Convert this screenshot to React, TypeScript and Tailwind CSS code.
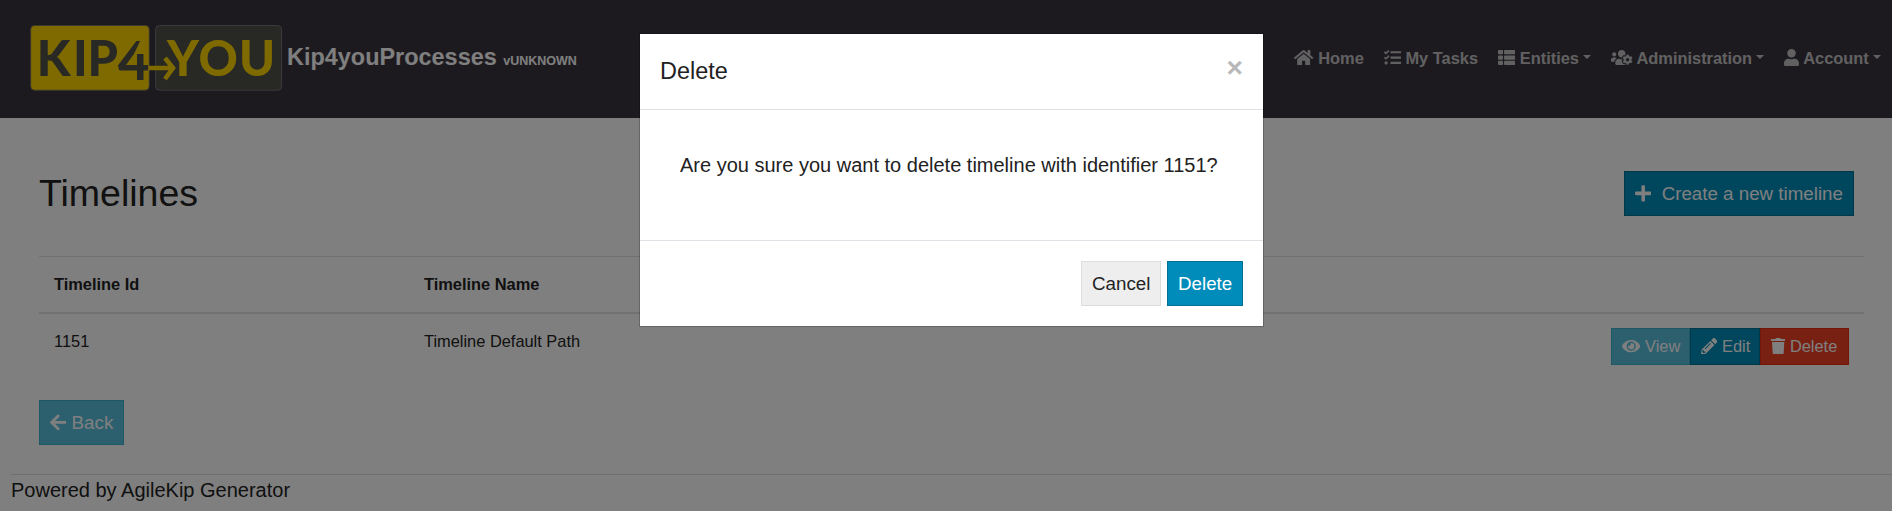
import React from "react";
import {
  FaArrowLeft,
  FaEye,
  FaHome,
  FaPencilAlt,
  FaPlus,
  FaTasks,
  FaThList,
  FaTrash,
  FaUser,
  FaUsersCog,
} from "react-icons/fa";
import type { IconType } from "react-icons";

function Icon({ as: As, ratio = "w-[1em]" }: { as: IconType; ratio?: string }) {
  return <As className={`inline-block h-[1em] align-[-0.125em] ${ratio}`} />;
}

function Logo() {
  return (
    <svg width="254" height="67" viewBox="29 24 254 67" className="block shrink-0">
      <rect x="30.7" y="25.5" width="118.5" height="64.7" rx="4" fill="#ffd400" stroke="#70706a" strokeWidth="0.8" />
      <rect x="155.6" y="25.5" width="126" height="64.7" rx="4" fill="#505148" stroke="#747478" strokeWidth="1" />
      <g fontFamily="Lato, 'Liberation Sans', sans-serif" fontWeight="900" fontSize="48.5">
        <g fill="#505148">
          <text x="36.8" y="75.5">K</text>
          <text x="73" y="75.5">I</text>
          <text x="87.5" y="75.5">P</text>
          <text x="118" y="79.7" fontSize="54">4</text>
        </g>
        <path d="M141 39H148V54H134Z" fill="#ffd400" />
        <g fill="#ffd400">
          <text x="167" y="75.5">Y</text>
          <text x="198.4" y="75.5">O</text>
          <text x="239" y="75.5">U</text>
        </g>
      </g>
      <path d="M149 68H173M165 58L173 68L165 79" fill="none" stroke="#ffd400" strokeWidth="4.6" />
    </svg>
  );
}

function NavItem({ icon: As, ratio = "w-[1.045em]", label, caret }: { icon: IconType; ratio?: string; label: string; caret?: boolean }) {
  return (
    <a className="whitespace-nowrap">
      <As className={`inline-block h-[1.045em] align-[-0.14em] ${ratio}`} /> {label}
      {caret && (
        <span className="ml-[0.255em] inline-block border-x-4 border-t-4 border-x-transparent border-t-current align-[0.3em]" />
      )}
    </a>
  );
}

function Header() {
  return (
    <header className="flex h-[118px] items-start justify-between bg-[#39353d] pr-[11px] font-bold">
      <div className="flex pl-[29px] pt-6">
        <Logo />
        <div className="ml-1 mt-4 whitespace-nowrap text-[23.44px] leading-[35px] text-white">
          Kip4youProcesses <span className="text-[12.5px]">vUNKNOWN</span>
        </div>
      </div>
      <nav className="mt-[46px] flex gap-5 text-[16.4px] leading-[24.6px] text-[#c4c3c5]">
        <NavItem icon={FaHome} ratio="w-[1.175em]" label="Home" />
        <NavItem icon={FaTasks} label="My Tasks" />
        <NavItem icon={FaThList} label="Entities" caret />
        <NavItem icon={FaUsersCog} ratio="w-[1.305em]" label="Administration" caret />
        <NavItem icon={FaUser} ratio="w-[0.915em]" label="Account" caret />
      </nav>
    </header>
  );
}

const button = "h-[45px] border px-[10px] text-[18.75px] leading-[43px] whitespace-nowrap";
const smallButton = "h-[37px] border px-[10px] text-[16.4px] leading-[35px] whitespace-nowrap text-left";

function Timelines() {
  return (
    <main className="h-[356px] pl-[39px] pr-7 pt-[53px]">
      <div className="flex h-[85px] items-start justify-between">
        <h2 className="text-[37.5px] leading-[45px] text-[#222]">Timelines</h2>
        <button className={`${button} mr-[10px] w-[230px] border-[#007095] bg-[#008cba] text-left text-white`}>
          <Icon as={FaPlus} ratio="w-[0.875em]" /> <span className="ml-[5px]">Create a new timeline</span>
        </button>
      </div>
      <div className="text-[16.4px] leading-[24.6px] text-[#222]">
        <div className="flex h-[58px] border-b-2 border-t border-b-[#dee2e6] border-t-[#dee2e6] pl-[15px] pt-[15px] font-bold">
          <div className="w-[370px]">Timeline Id</div>
          <div>Timeline Name</div>
        </div>
        <div className="flex h-[86px] pl-[15px] pr-[15px] pt-[14px]">
          <div className="w-[370px] pt-px">1151</div>
          <div className="grow pt-px">Timeline Default Path</div>
          <div className="flex text-white">
            <button className={`${smallButton} w-[79px] border-[#3db0cb] bg-[#5bc0de]`}>
              <Icon as={FaEye} ratio="w-[1.125em]" /> View
            </button>
            <button className={`${smallButton} w-[70px] border-[#007095] bg-[#008cba]`}>
              <Icon as={FaPencilAlt} /> Edit
            </button>
            <button className={`${smallButton} w-[89px] border-[#ea2f10] bg-[#f04124]`}>
              <Icon as={FaTrash} ratio="w-[0.875em]" /> Delete
            </button>
          </div>
        </div>
      </div>
      <button className={`${button} w-[85px] border-[#3db0cb] bg-[#5bc0de] text-left text-white`}>
        <Icon as={FaArrowLeft} ratio="w-[0.875em]" /> Back
      </button>
    </main>
  );
}

function DeleteDialog() {
  return (
    <div className="absolute inset-0 bg-black/50 pl-[639px] pt-[33px]">
      <section
        role="dialog"
        className="flex h-[294px] w-[625px] flex-col border border-black/20 bg-white bg-clip-padding text-[#222]"
      >
        <div className="flex h-[76px] items-start justify-between border-b border-[#dee2e6] px-5 pt-5">
          <h5 className="text-[23.44px] leading-[35px]">Delete</h5>
          <button className="text-[28.1px] font-bold leading-[28px] text-[#b8b8b8]">×</button>
        </div>
        <p className="h-[130px] px-10 pt-10 text-[20px] leading-[30px] whitespace-nowrap">
          Are you sure you want to delete timeline with identifier 1151?
        </p>
        <div className="flex grow justify-end gap-[6px] border-t border-[#dee2e6] pr-5 pt-5">
          <button className={`${button} w-20 border-[#ddd] bg-[#eee]`}>Cancel</button>
          <button className={`${button} w-[76px] border-[#007095] bg-[#008cba] text-white`}>Delete</button>
        </div>
      </section>
    </div>
  );
}

export default function App() {
  return (
    <div className="relative h-[511px] overflow-hidden bg-white font-['Liberation_Sans',sans-serif]">
      <Header />
      <Timelines />
      <footer className="ml-[11px] border-t border-[#dfdfdf] text-[20px] leading-[30px] text-[#222]">
        Powered by AgileKip Generator
      </footer>
      <DeleteDialog />
    </div>
  );
}
